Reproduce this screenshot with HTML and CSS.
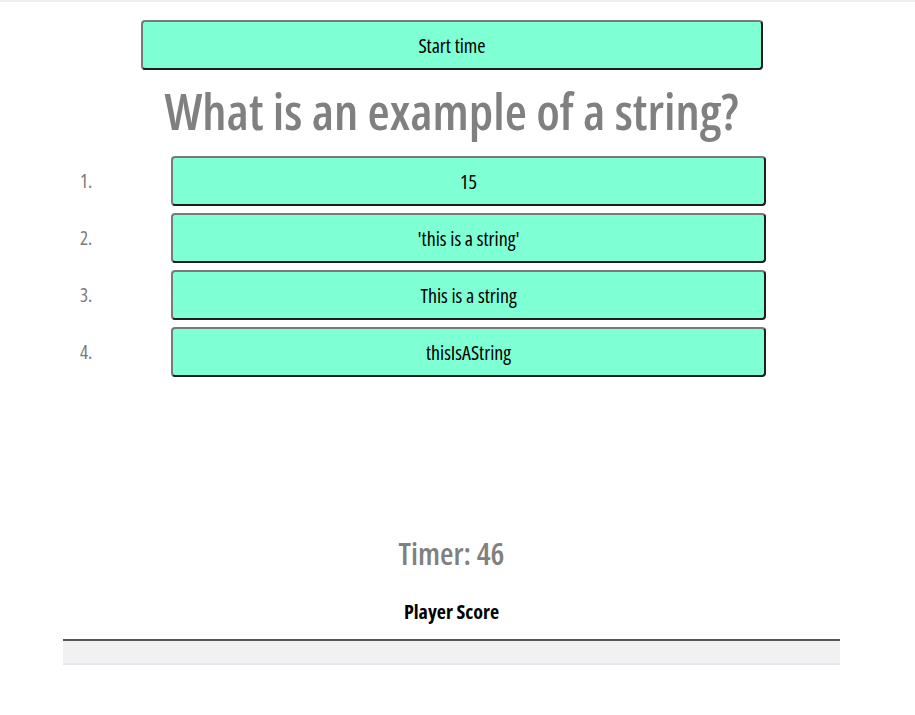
FILE: index.html
```html
<!DOCTYPE html>
<html lang="en">
<head>
<meta charset="utf-8">
<title>Code Quiz</title>
<link rel="stylesheet" href="styles.css">
</head>
<body>
<div class="topline"></div>
<main class="page">
  <button class="btn start-btn" type="button">Start time</button>
  <h1 class="question">What is an example of a string?</h1>
  <ol class="answers">
    <li class="answer"><span class="num">1.</span><button class="btn answer-btn" type="button">15</button></li>
    <li class="answer"><span class="num">2.</span><button class="btn answer-btn" type="button">'this is a string'</button></li>
    <li class="answer"><span class="num">3.</span><button class="btn answer-btn" type="button">This is a string</button></li>
    <li class="answer"><span class="num">4.</span><button class="btn answer-btn" type="button">thisIsAString</button></li>
  </ol>
  <h2 class="timer">Timer: 46</h2>
  <h3 class="score-title">Player Score</h3>
  <div class="score-table"></div>
</main>
</body>
</html>
```
FILE: styles.css
```css
html, body {
  margin: 0;
  padding: 0;
  background: #ffffff;
}

body {
  font-family: "Open Sans", "Noto Sans", "DejaVu Sans", sans-serif;
  font-stretch: 75%;
  color: #000;
}

.topline {
  height: 2px;
  background: #efefef;
}

.page {
  width: 777px;
  margin-left: 63px;
  display: flex;
  flex-direction: column;
  align-items: stretch;
}

.btn {
  font-family: inherit;
  font-stretch: 75%;
  font-size: 20px;
  font-weight: 400;
  color: #000;
  background: #7fffd4;
  border-style: solid;
  border-width: 2px;
  border-color: #7a7a7a #1e1e1e #1e1e1e #7a7a7a;
  border-radius: 4px;
  height: 50px;
  padding: 0;
  cursor: pointer;
}

.start-btn {
  margin: 18px 77px 0 78px;
}

.question {
  margin: 10px 0 0;
  text-align: center;
  font-size: 51px;
  font-weight: 600;
  color: #808080;
  line-height: 60px;
}

.answers {
  list-style: none;
  margin: 16px 0 0;
  padding: 0;
  display: flex;
  flex-direction: column;
  gap: 7px;
}

.answer {
  display: grid;
  grid-template-columns: 108px 595px;
  align-items: center;
}

.num {
  padding-left: 17px;
  font-size: 19px;
  color: #7a7a7a;
}

.answer-btn {
  width: 595px;
}

.timer {
  margin: 156px 0 0;
  text-align: center;
  font-size: 31px;
  font-weight: 600;
  color: #808080;
  line-height: 40px;
}

.score-title {
  margin: 26px 0 0;
  text-align: center;
  font-size: 20px;
  font-weight: 700;
  line-height: 26px;
}

.score-table {
  margin-top: 14px;
  height: 22px;
  background: #f1f1f1;
  border-top: 2px solid #555;
  border-bottom: 2px solid #e4e8ee;
}
```
